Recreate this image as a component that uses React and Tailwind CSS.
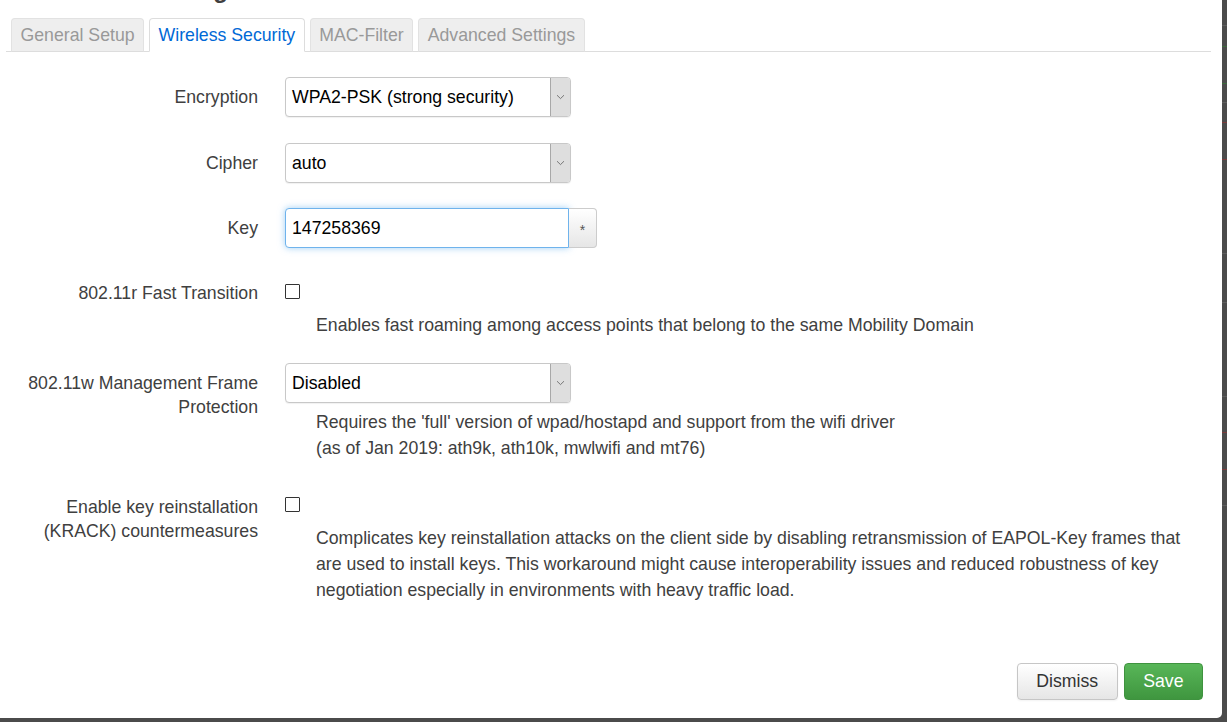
import React from "react";

const font = "font-['Liberation_Sans',Arial,sans-serif]";

function Chevron() {
  return (
    <svg width="9" height="6" viewBox="0 0 9 6" fill="none">
      <path d="M1 1.2 L4.5 4.6 L8 1.2" stroke="#6b6b6b" strokeWidth="0.9" />
    </svg>
  );
}

function Select({ value }) {
  return (
    <div className="flex w-[286px] h-[40px] border border-[#c8c8c8] rounded-[4px] overflow-hidden bg-white shadow-[0_1px_1px_rgba(0,0,0,0.06)]">
      <div className="flex-1 pl-[6px] leading-[38px] text-[17.7px] text-black">{value}</div>
      <div className="w-[20px] bg-[#dedede] border-l border-[#a8a8a8] flex items-center justify-center">
        <Chevron />
      </div>
    </div>
  );
}

function Checkbox() {
  return <div className="w-[15px] h-[15px] border border-[#333] bg-white rounded-[1px]" />;
}

function Label({ children }) {
  return (
    <div className="w-[252px] shrink-0 text-right text-[17.7px] leading-[24px] text-[#404040]">
      {children}
    </div>
  );
}

function Desc({ children, className = "" }) {
  return (
    <div className={"pl-[31px] text-[17.7px] leading-[26px] text-[#404040] " + className}>
      {children}
    </div>
  );
}

const tabs = ["General Setup", "Wireless Security", "MAC-Filter", "Advanced Settings"];

function Strip() {
  return (
    <div className="w-[5px] h-full flex flex-col">
      <div className="mt-[25px] h-px bg-[#5e5e5e]" />
      <div className="mt-[20px] h-px bg-[#3d6b3d]" />
      <div className="mt-[36px] h-px bg-[#3d6b3d]" />
      <div className="mt-[18px] h-px bg-[#5e5e5e]" />
      <div className="mt-[19px] h-px bg-[#7a3b3b]" />
      <div className="mt-[36px] h-px bg-[#7a3b3b]" />
      <div className="mt-[93px] h-px bg-[#5e5e5e]" />
      <div className="mt-[48px] h-px bg-[#5e5e5e]" />
      <div className="mt-[93px] h-px bg-[#5e5e5e]" />
      <div className="mt-[35px] h-px bg-[#7a3b3b]" />
      <div className="mt-[36px] h-px bg-[#7a3b3b]" />
      <div className="mt-[35px] h-px bg-[#5e5e5e]" />
    </div>
  );
}

export default function App() {
  return (
    <div className={"w-[1227px] h-[722px] bg-[#4b4b4b] flex flex-col overflow-hidden " + font}>
      <div className="flex h-[718px]">
        <div className="w-[1222px] h-full bg-white rounded-br-[5px] flex flex-col pl-[6px] pr-[11px]">
          {/* heading, scrolled mostly out of view */}
          <div className="h-[4px] overflow-hidden">
            <h4 className="-mt-[24px] pl-[62px] text-[24px] leading-[28px] font-bold text-[#404040]">
              Device Configuration
            </h4>
          </div>

          {/* tabs */}
          <ul className="mt-[14px] flex gap-[5px] pl-[5px] border-b border-[#dddddd]">
            {tabs.map((t, i) => (
              <li
                key={t}
                className={
                  "-mb-px h-[34px] px-[8.5px] border rounded-t-[4px] text-[17.7px] leading-[32px] " +
                  (i === 1
                    ? "bg-white border-[#dddddd] border-b-white text-[#0069d6]"
                    : "bg-[#eeeeee] border-[#e2e2e2] border-b-[#dddddd] text-[#999999]")
                }
              >
                {t}
              </li>
            ))}
          </ul>

          {/* form */}
          <div className="flex flex-col">
            <div className="flex gap-[27px] mt-[25px]">
              <Label><div className="pt-[8px]">Encryption</div></Label>
              <Select value="WPA2-PSK (strong security)" />
            </div>

            <div className="flex gap-[27px] mt-[26px]">
              <Label><div className="pt-[8px]">Cipher</div></Label>
              <Select value="auto" />
            </div>

            <div className="flex gap-[27px] mt-[25px]">
              <Label><div className="pt-[8px]">Key</div></Label>
              <div className="flex h-[40px]">
                <div className="w-[284px] h-full border border-[#6fb3ec] rounded-l-[4px] shadow-[0_0_7px_rgba(82,168,236,0.55)] pl-[6px] leading-[38px] text-[17.7px] text-black bg-white">
                  147258369
                </div>
                <div className="w-[28px] h-full border border-l-0 border-[#cccccc] rounded-r-[4px] bg-gradient-to-b from-white to-[#e6e6e6] flex items-center justify-center text-[14px] text-[#555] pt-[4px]">
                  *
                </div>
              </div>
            </div>

            <div className="flex gap-[27px] mt-[33px]">
              <Label>802.11r Fast Transition</Label>
              <div className="flex flex-col">
                <div className="mt-[3px]"><Checkbox /></div>
                <Desc className="mt-[13px]">
                  Enables fast roaming among access points that belong to the same Mobility Domain
                </Desc>
              </div>
            </div>

            <div className="flex gap-[27px] mt-[25px]">
              <Label>
                <div className="pt-[8px]">
                  802.11w Management Frame
                  <br />
                  Protection
                </div>
              </Label>
              <div className="flex flex-col">
                <Select value="Disabled" />
                <Desc className="mt-[6px]">
                  Requires the 'full' version of wpad/hostapd and support from the wifi driver
                  <br />
                  (as of Jan 2019: ath9k, ath10k, mwlwifi and mt76)
                </Desc>
              </div>
            </div>

            <div className="flex gap-[27px] mt-[34px]">
              <Label>
                Enable key reinstallation
                <br />
                (KRACK) countermeasures
              </Label>
              <div className="flex flex-col">
                <div className="mt-[2px]"><Checkbox /></div>
                <Desc className="mt-[13px]">
                  Complicates key reinstallation attacks on the client side by disabling retransmission of EAPOL-Key frames that
                  <br />
                  are used to install keys. This workaround might cause interoperability issues and reduced robustness of key
                  <br />
                  negotiation especially in environments with heavy traffic load.
                </Desc>
              </div>
            </div>
          </div>

          {/* footer */}
          <div className="mt-[60px] flex justify-end gap-[6px] pr-[8px]">
            <button className="h-[37px] px-[18.5px] border border-[#c6c6c6] rounded-[4px] bg-gradient-to-b from-white to-[#e6e6e6] text-[17.7px] text-[#333] shadow-[0_1px_2px_rgba(0,0,0,0.05)]">
              Dismiss
            </button>
            <button className="h-[37px] px-[18.5px] border border-[#3f933f] rounded-[4px] bg-gradient-to-b from-[#58b658] to-[#3f963f] text-[17.7px] text-white">
              Save
            </button>
          </div>
        </div>
        <Strip />
      </div>
    </div>
  );
}
